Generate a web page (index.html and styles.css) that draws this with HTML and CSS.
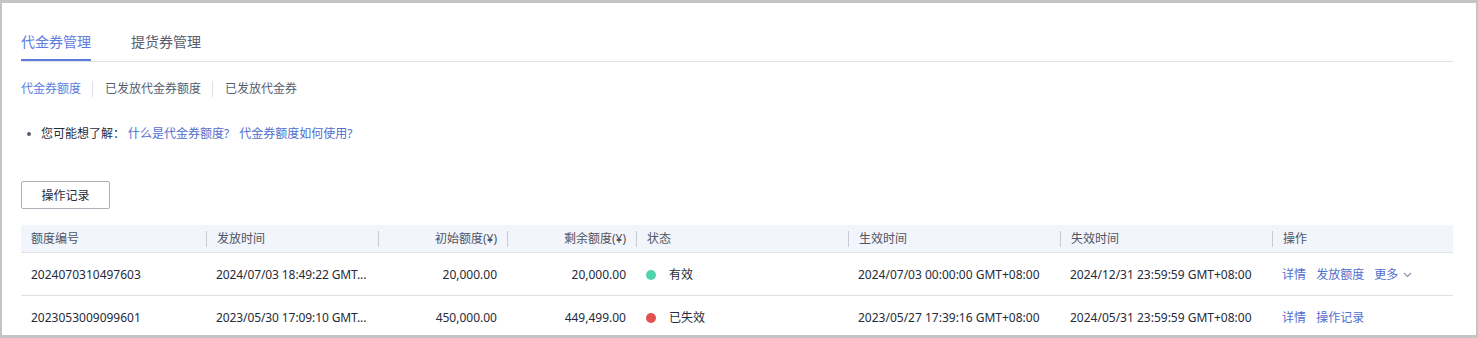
FILE: index.html
```html
<!DOCTYPE html>
<html lang="zh-CN">
<head>
    <meta charset="UTF-8">
    <title>代金券管理</title>
    <link rel="stylesheet" href="styles.css">
</head>
<body>
    <div class="panel">
        <!-- Pestañas principales -->
        <div class="tabs">
            <span class="tab active">代金券管理</span>
            <span class="tab">提货券管理</span>
        </div>

        <div class="subtabs">
            <span class="subtab active">代金券额度</span>
            <span class="subtab">已发放代金券额度</span>
            <span class="subtab">已发放代金券</span>
        </div>

        <div class="tips">
            <span class="bullet"></span>
            <span class="tips-label">您可能想了解：</span>
            <a class="link">什么是代金券额度?</a>
            <a class="link">代金券额度如何使用?</a>
        </div>

        <button class="btn">操作记录</button>

        <table class="grid">
            <colgroup>
                <col style="width:185px">
                <col style="width:172px">
                <col style="width:129px">
                <col style="width:129px">
                <col style="width:212px">
                <col style="width:212px">
                <col style="width:212px">
                <col style="width:181px">
            </colgroup>
            <tr>
                <th class="first"><div class="th-in">额度编号</div></th>
                <th><div class="th-in">发放时间</div></th>
                <th><div class="th-in num">初始额度(¥)</div></th>
                <th><div class="th-in num">剩余额度(¥)</div></th>
                <th><div class="th-in">状态</div></th>
                <th><div class="th-in">生效时间</div></th>
                <th><div class="th-in">失效时间</div></th>
                <th><div class="th-in">操作</div></th>
            </tr>
            <tr>
                <td>2024070310497603</td>
                <td class="trunc" title="2024/07/03 18:49:22 GMT+08:00">2024/07/03 18:49:22 GMT...</td>
                <td class="num">20,000.00</td>
                <td class="num">20,000.00</td>
                <td><span class="dot ok"></span>有效</td>
                <td>2024/07/03 00:00:00 GMT+08:00</td>
                <td>2024/12/31 23:59:59 GMT+08:00</td>
                <td class="actions">
                    <a class="link">详情</a>
                    <a class="link">发放额度</a>
                    <a class="link">更多 <svg class="chev" width="9" height="6" viewBox="0 0 9 6"><polyline points="1,1 4.5,4.5 8,1" fill="none" stroke="#8a8fa8" stroke-width="1.1"/></svg></a>
                </td>
            </tr>
            <tr>
                <td>2023053009099601</td>
                <td class="trunc" title="2023/05/30 17:09:10 GMT+08:00">2023/05/30 17:09:10 GMT...</td>
                <td class="num">450,000.00</td>
                <td class="num">449,499.00</td>
                <td><span class="dot off"></span>已失效</td>
                <td>2023/05/27 17:39:16 GMT+08:00</td>
                <td>2024/05/31 23:59:59 GMT+08:00</td>
                <td class="actions">
                    <a class="link">详情</a>
                    <a class="link">操作记录</a>
                </td>
            </tr>
        </table>
    </div>
</body>
</html>
```

FILE: styles.css
```css
body {
    margin: 0;
    background-color: #c4c4c4;
    font-family: "Noto Sans", "Noto Sans CJK SC", sans-serif;
    color: #252b3a;
}

.panel {
    background-color: #ffffff;
    margin: 3px 2px 0 2px;
    height: 332px;
    padding: 0 23px 0 19px;
    overflow: hidden;
    box-sizing: border-box;
}

/* Pestañas */
.tabs {
    display: flex;
    gap: 40px;
    margin-top: 29px;
    border-bottom: 1px solid #dfe1e6;
}

.tab {
    font-size: 14px;
    line-height: 20px;
    padding-bottom: 7px;
    border-bottom: 2px solid transparent;
    color: #575d6c;
}

.tab.active {
    color: #5e7ce0;
    border-bottom-color: #5e7ce0;
}

.subtabs {
    display: flex;
    margin-top: 19px;
}

.subtab {
    font-size: 12px;
    line-height: 16px;
    padding: 0 11px 0 12px;
    border-left: 1px solid #dfe1e6;
    color: #575d6c;
}

.subtab:first-child {
    border-left: none;
    padding-left: 0;
}

.subtab.active {
    color: #5e7ce0;
}

.tips {
    display: flex;
    align-items: center;
    margin-top: 28px;
    font-size: 12px;
    line-height: 18px;
}

.bullet {
    width: 4px;
    height: 4px;
    border-radius: 50%;
    background-color: #575d6c;
    margin: 0 10px 0 6px;
}

.tips-label {
    margin-right: 3px;
}

.link {
    color: #526ecc;
    margin-right: 10px;
    cursor: pointer;
}

.btn {
    display: block;
    margin-top: 38px;
    width: 89px;
    height: 28px;
    border: 1px solid #adb0b8;
    border-radius: 2px;
    background-color: #ffffff;
    font-family: inherit;
    font-size: 12px;
    color: #252b3a;
}

/* Tabla */
.grid {
    margin-top: 16px;
    border-collapse: collapse;
    table-layout: fixed;
    width: 1432px;
    font-size: 12px;
}

.grid th {
    background-color: #f2f5fc;
    height: 27px;
    padding: 0;
    font-weight: normal;
    text-align: left;
    color: #4f5462;
    border-bottom: 1px solid #dfe1e6;
}

.th-in {
    line-height: 16px;
    padding: 0 10px;
    border-left: 1px solid #c8cbd2;
}

.first .th-in {
    border-left: none;
}

.th-in.num {
    text-align: right;
}

.grid td {
    height: 42px;
    padding: 0 10px;
    border-bottom: 1px solid #dfe1e6;
    white-space: nowrap;
}

.grid td.num {
    text-align: right;
}

.grid td.trunc {
    padding-right: 0;
    letter-spacing: -0.1px;
}

.dot {
    display: inline-block;
    width: 10px;
    height: 10px;
    border-radius: 50%;
    margin-right: 13px;
    vertical-align: -1px;
}

.dot.ok {
    background-color: #50d4ab;
}

.dot.off {
    background-color: #e25050;
}

.actions .link {
    margin-right: 7px;
}

.chev {
    vertical-align: 1px;
    margin-left: 2px;
}
```
